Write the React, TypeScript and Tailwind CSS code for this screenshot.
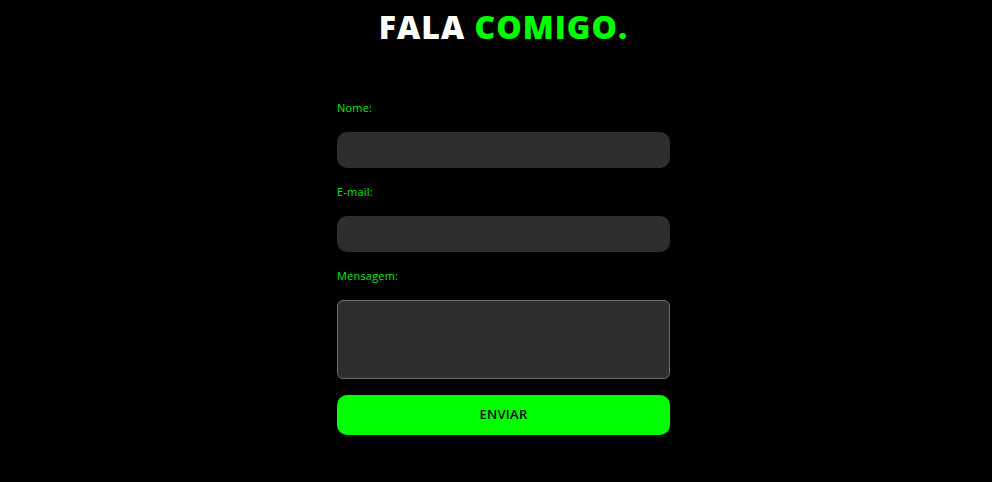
const font = { fontFamily: '"Open Sans", "Noto Sans", sans-serif' }

export default function App() {
  return (
    <div className="min-h-[482px] bg-black pl-[15px]" style={font}>
      <h1 className="flex h-[54px] items-center justify-center text-[32px] font-extrabold tracking-[1px] text-white">
        FALA&nbsp;<span className="text-[#00ff00]">COMIGO.</span>
      </h1>
      <form className="mx-auto mt-[30px] flex w-[333px] flex-col">
        <label className="flex h-12 items-center text-[11px] font-medium tracking-[0.2px] text-[#00ee00]">Nome:</label>
        <input className="h-9 rounded-[10px] bg-[#2f2d2e] px-3 text-white outline-none" />
        <label className="flex h-12 items-center text-[11px] font-medium tracking-[0.2px] text-[#00ee00]">E-mail:</label>
        <input className="h-9 rounded-[10px] bg-[#2f2d2e] px-3 text-white outline-none" />
        <label className="flex h-12 items-center text-[11px] font-medium tracking-[0.2px] text-[#00ee00]">Mensagem:</label>
        <textarea className="h-[79px] resize-none rounded-[6px] border border-[#6e6e6e] bg-[#2f2d2e] px-3 text-white outline-none" />
        <button
          type="button"
          className="mt-4 h-10 rounded-[10px] bg-[#00ff00] text-[13px] font-semibold tracking-[0.3px] text-black"
        >
          ENVIAR
        </button>
      </form>
    </div>
  )
}
